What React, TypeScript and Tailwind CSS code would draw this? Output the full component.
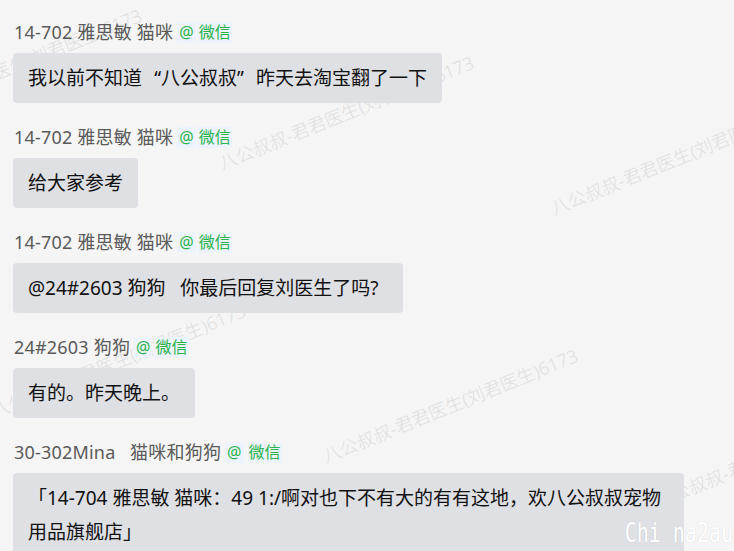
import React from 'react';

interface Message {
  name: string;
  body: React.ReactNode;
  tagGap?: boolean;
}

const FONT = "font-['Noto_Sans','Noto_Sans_CJK_SC',sans-serif]";

// full-width curly quotes, so they take one CJK cell like the original font
const OpenQuote = () => <span className="inline-block w-[19px] text-right">“</span>;
const CloseQuote = () => <span className="inline-block w-[19px] text-left">”</span>;

const messages: Message[] = [
  {
    name: '14-702 雅思敏 猫咪',
    body: (
      <>
        我以前不知道<OpenQuote />八公叔叔<CloseQuote />昨天去淘宝翻了一下
      </>
    ),
  },
  { name: '14-702 雅思敏 猫咪', body: '给大家参考' },
  { name: '14-702 雅思敏 猫咪', body: '@24#2603 狗狗\u00a0\u00a0\u00a0你最后回复刘医生了吗?\u00a0\u00a0' },
  { name: '24#2603 狗狗', body: '有的。昨天晚上。' },
  {
    name: '30-302Mina\u00a0\u00a0\u00a0猫咪和狗狗',
    body: '「14-704 雅思敏 猫咪：49 1:/啊对也下不有大的有有这地，欢八公叔叔宠物用品旗舰店」',
    tagGap: true,
  },
];

// watermark anchors (bottom-left of the first glyph)
const marks = [
  { x: -109, y: 125 },
  { x: 223, y: 172 },
  { x: 555, y: 217 },
  { x: -5, y: 420 },
  { x: 327, y: 465 },
  { x: 659, y: 510 },
];

const SourceTag: React.FC<{ gap?: boolean }> = ({ gap }) => (
  <span className="ml-[4px] flex items-center text-[16px] leading-[21px] text-[#2ab24c]">
    <span className="bg-[#ecf3fb] px-[2px]">@</span>
    <span className={`${gap ? 'ml-[4px]' : 'ml-[2px]'} bg-[#ecf3fb] px-[1px]`}>微信</span>
  </span>
);

const ChatItem: React.FC<{ msg: Message }> = ({ msg }) => (
  <div className="mb-[21px]">
    <div className="flex h-[26px] items-center pl-[1px]">
      <span className="whitespace-pre text-[18px] leading-[26px] tracking-[0.2px] text-[#5a5a5a]">{msg.name}</span>
      <SourceTag gap={msg.tagGap} />
    </div>
    <div className="mt-[8px] w-fit max-w-[671px] rounded-[4px] bg-[#dfe0e4] px-[15px] py-2 text-[19px] leading-[34px] text-[#111]">
      {msg.body}
    </div>
  </div>
);

export default function App() {
  return (
    <div className={`relative h-[551px] w-full overflow-hidden bg-[#f5f5f5] ${FONT}`}>
      <div className="pointer-events-none absolute inset-0">
        {marks.map((m, i) => (
          <span
            key={i}
            className="absolute origin-bottom-left -rotate-[22deg] whitespace-nowrap text-[18px] font-light leading-[18px] text-[#dfdfdf]"
            style={{ left: m.x, top: m.y - 18 }}
          >
            八公叔叔-君君医生(刘君医生)6173
          </span>
        ))}
      </div>

      <div className="relative px-[13px] pt-[19px]">
        {messages.map((m, i) => (
          <ChatItem key={i} msg={m} />
        ))}
      </div>

      <div className="pointer-events-none absolute bottom-[4px] right-[1px] origin-bottom scale-y-[1.3] font-['DejaVu_Sans_Mono',monospace] text-[20px] leading-[22px] text-white [text-shadow:0_0_1px_rgba(0,0,0,0.15)]">
        Chi na2au
      </div>
    </div>
  );
}
